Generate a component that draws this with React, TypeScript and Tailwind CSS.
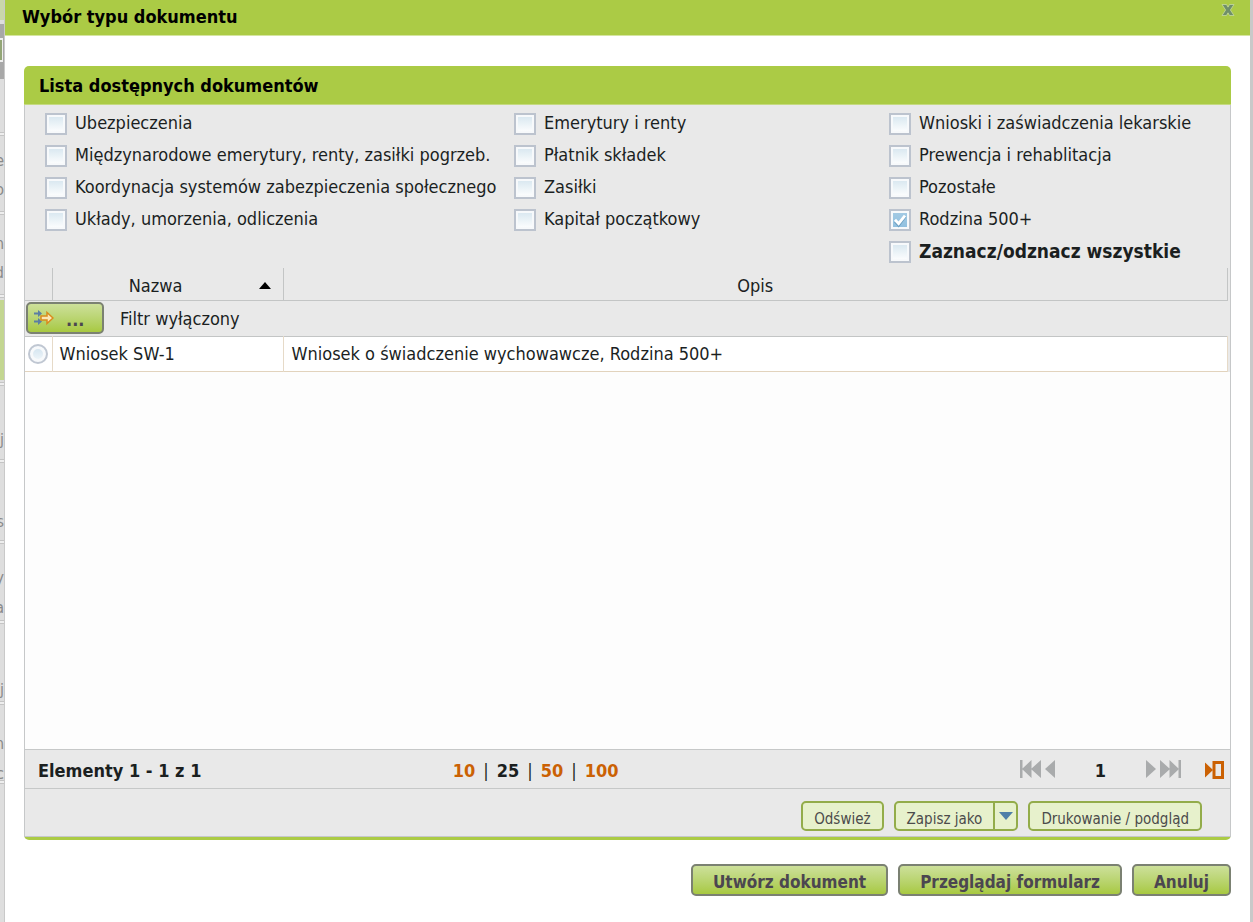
import { useState } from 'react';

interface Category {
  id: string;
  label: string;
  bold?: boolean;
}

const COLUMNS: Category[][] = [
  [
    { id: 'ubezpieczenia', label: 'Ubezpieczenia' },
    { id: 'miedzynarodowe', label: 'Międzynarodowe emerytury, renty, zasiłki pogrzeb.' },
    { id: 'koordynacja', label: 'Koordynacja systemów zabezpieczenia społecznego' },
    { id: 'uklady', label: 'Układy, umorzenia, odliczenia' },
  ],
  [
    { id: 'emerytury', label: 'Emerytury i renty' },
    { id: 'platnik', label: 'Płatnik składek' },
    { id: 'zasilki', label: 'Zasiłki' },
    { id: 'kapital', label: 'Kapitał początkowy' },
  ],
  [
    { id: 'wnioski', label: 'Wnioski i zaświadczenia lekarskie' },
    { id: 'prewencja', label: 'Prewencja i rehablitacja' },
    { id: 'pozostale', label: 'Pozostałe' },
    { id: 'rodzina', label: 'Rodzina 500+' },
    { id: 'wszystkie', label: 'Zaznacz/odznacz wszystkie', bold: true },
  ],
];

const ALL_IDS = COLUMNS.flat().map(c => c.id);

const PAGE_SIZES = [10, 25, 50, 100];

// Separators and text showing from the page under the dialog
const BACKDROP = [
  { top: 153, text: 'e' },
  { top: 182, text: 'o' },
  { top: 236, text: 'n' },
  { top: 265, text: 'd' },
  { top: 432, text: 'j' },
  { top: 514, text: 's' },
  { top: 570, text: 'y' },
  { top: 600, text: 'a' },
  { top: 682, text: 'j' },
  { top: 736, text: 'n' },
  { top: 766, text: 'c' },
];

const BACKDROP_LINES = [132, 211, 294, 382, 459, 540, 620, 701, 780];

function Backdrop() {
  return (
    <div className="relative w-1 shrink-0 overflow-hidden bg-[#dedede] text-base text-[#8a8a8a]" aria-hidden="true">
      <div className="h-5 bg-[#c9d6ab]" />
      <div className="mt-1 h-[55px] bg-[#a8a8a8] pt-[14px]">
        <div className="h-6 w-[3px] border-y-2 border-r border-[#eeeeee] bg-[#93a676]" />
      </div>
      <div className="absolute top-[300px] h-20 w-1 bg-[#c3d691]" />
      {BACKDROP_LINES.map(top => (
        <div key={top} className="absolute h-1 w-1 border-y border-[#c4c4c4] bg-[#eeeeee]" style={{ top }} />
      ))}
      {BACKDROP.map(({ top, text }) => (
        <span key={top} className="absolute right-0 leading-4" style={{ top }}>{text}</span>
      ))}
    </div>
  );
}

function CategoryBox({ item, checked, onToggle }: { item: Category; checked: boolean; onToggle: () => void }) {
  return (
    <li className="flex h-8 items-center">
      <span className="relative mr-2 flex size-[22px]">
        <input
          id={item.id}
          type="checkbox"
          checked={checked}
          onChange={onToggle}
          className="size-[22px] appearance-none border-2 border-[#bcc3ce] bg-linear-to-b from-[#d6e6ef] to-white shadow-[inset_0_0_0_2px_#f7f9fb] checked:from-[#a5cbe4] checked:to-[#8fbfdf]"
        />
        {checked && (
          <svg viewBox="0 0 22 22" className="pointer-events-none absolute inset-0 size-full">
            <path d="M6 12.5l3.6 4 6.6-9" fill="none" stroke="#6c9fc2" strokeWidth="2.6" />
            <path d="M6 10.8l3.6 3.8 6.4-8" fill="none" stroke="#fff" strokeWidth="2.8" />
          </svg>
        )}
      </span>
      <label htmlFor={item.id} className={item.bold ? 'pb-0.5 text-[19px] leading-6 font-bold' : 'pb-0.5 text-lg leading-6'}>
        {item.label}
      </label>
    </li>
  );
}

function FilterIcon() {
  return (
    <svg viewBox="0 0 20 16" className="h-4 w-5">
      <path d="M0 3.5h5M0 11.5h5" stroke="#5c7fa3" strokeWidth="1.8" />
      <path d="M4 0l4 3.5L4 7zM4 8l4 3.5L4 15z" fill="#5c7fa3" />
      <path d="M7 6h6V2.5L19 8l-6 5.500V10H7z" fill="#fbe6b4" stroke="#d98b1c" strokeWidth="1.5" />
    </svg>
  );
}

export default function App() {
  const [selected, setSelected] = useState<string[]>(['rodzina']);
  const [pageSize, setPageSize] = useState(25);
  const [picked, setPicked] = useState(false);

  const toggle = (id: string) => {
    if (id === 'wszystkie') {
      setSelected(prev => (prev.includes(id) ? [] : ALL_IDS));
      return;
    }
    setSelected(prev => (prev.includes(id) ? prev.filter(s => s !== id) : [...prev, id]));
  };

  const smallButton =
    'flex h-[30px] items-end rounded-[5px] border-2 border-[#93ac4a] bg-[#e7f1cc] text-[15px] leading-5 text-[#4b4b4b]';
  const bigButton =
    'h-8 rounded-[5px] border-2 border-[#7b8172] bg-linear-to-b from-[#cde09a] to-[#a8c93f] px-5 pt-1 text-[17px] leading-6 font-bold text-[#4b4650]';

  return (
    <div className="flex min-h-screen bg-[#c9c9c9] font-['DejaVu_Sans_Condensed','DejaVu_Sans',sans-serif] text-[#1b1f1f]">
      <Backdrop />
      <div role="dialog" aria-labelledby="dialog-title" className="mr-[3px] ml-px flex min-w-0 flex-1 flex-col bg-white">
        <header className="flex h-9 items-start justify-between border-b border-[#d5e5a0] bg-[#abcb45] pr-[15px] pl-[17px] text-black">
          <h1 id="dialog-title" className="pt-[5px] text-lg leading-6 font-bold">Wybór typu dokumentu</h1>
          <button type="button" aria-label="Zamknij" className="pt-1">
            <svg viewBox="0 0 14 12" className="h-3 w-[14px]">
              <path d="M1 .5h4.500L7 3.200 8.500.5H13L9.400 6l3.600 5.500H8.500L7 8.800 5.500 11.500H1L4.600 6z" fill="#6f8f6a" stroke="#c6dba0" strokeWidth=".8" />
            </svg>
          </button>
        </header>

        <main className="flex flex-1 flex-col px-[19px] pt-[30px] pb-[26px]">
          <section className="flex flex-1 flex-col rounded-[5px] border-b-[3px] border-[#abcb45]">
            <h2 className="h-[39px] rounded-t-[5px] border-b border-[#c5da80] bg-[#abcb45] pt-2 pl-[15px] text-lg leading-6 font-bold text-black">
              Lista dostępnych dokumentów
            </h2>

            <div className="flex flex-1 flex-col border-x border-[#c6c8c9] bg-[#e9e9e9]">
              <div className="grid grid-cols-[469fr_375fr_341fr] pt-[3px] pl-5">
                {COLUMNS.map((column, i) => (
                  <ul key={i}>
                    {column.map(item => (
                      <CategoryBox
                        key={item.id}
                        item={item}
                        checked={selected.includes(item.id)}
                        onToggle={() => toggle(item.id)}
                      />
                    ))}
                  </ul>
                ))}
              </div>

              <div className="pr-0.5">
                <table className="w-full table-fixed border-collapse text-lg leading-6">
                  <colgroup>
                    <col className="w-[27px]" />
                    <col className="w-[231px]" />
                    <col />
                  </colgroup>
                  <thead>
                    <tr className="h-8 border-b border-[#c3c5c5]">
                      <th className="border-r border-[#c3c5c5]" />
                      <th className="border-r border-[#c3c5c5] pt-1 font-normal">
                        <button type="button" className="flex w-full items-center justify-center">
                          <span className="flex-1">Nazwa</span>
                          <svg viewBox="0 0 12 7" className="mr-3 h-[7px] w-3">
                            <path d="M0 7l6-7 6 7z" fill="#000" />
                          </svg>
                        </button>
                      </th>
                      <th className="border-r border-[#c3c5c5] pt-1 font-normal">Opis</th>
                    </tr>
                  </thead>
                  <tbody>
                    <tr className="h-9 border-b border-[#c3c5c5]">
                      <td colSpan={3}>
                        <div className="flex items-center pl-px">
                          <button
                            type="button"
                            className="flex h-8 w-[78px] items-center rounded-[5px] border-2 border-[#7b8172] bg-linear-to-b from-[#cde09a] to-[#a8c93f] pl-1.5 font-bold text-[#4b4650]"
                          >
                            <FilterIcon />
                            <span className="ml-3 pt-1">...</span>
                          </button>
                          <span className="ml-4 pt-0.5">Filtr wyłączony</span>
                        </div>
                      </td>
                    </tr>
                    <tr className="h-[35px] border-b border-[#e2d3bd] bg-white">
                      <td className="border-r border-[#e6dac8]">
                        <input
                          type="radio"
                          name="dokument"
                          aria-label="Wniosek SW-1"
                          checked={picked}
                          onChange={() => setPicked(true)}
                          className="mx-auto block size-5 appearance-none rounded-full border-2 border-[#c0c7d2] bg-linear-to-b from-[#cfe2ee] to-[#f3f8fb] shadow-[inset_0_0_0_3px_#f7f9fb] checked:from-[#6ba3c8] checked:to-[#6ba3c8]"
                        />
                      </td>
                      <td className="border-r border-[#e6dac8] pl-[7px]">Wniosek SW-1</td>
                      <td className="border-r border-[#e6dac8] pl-2">Wniosek o świadczenie wychowawcze, Rodzina 500+</td>
                    </tr>
                  </tbody>
                </table>
              </div>

              <div className="flex-1 bg-[#fdfdfd]" />

              <div className="flex h-10 items-center border-y border-[#c6c8c8] text-lg leading-6 font-bold">
                <div className="w-[35%] pt-1 pl-[13px]">Elementy 1 - 1 z 1</div>
                <div className="flex flex-1 items-center pt-1 pl-1.5">
                  {PAGE_SIZES.map((size, i) => (
                    <span key={size} className="flex items-center">
                      {i > 0 && <span className="mx-2 font-normal">|</span>}
                      <button
                        type="button"
                        onClick={() => setPageSize(size)}
                        className={size === pageSize ? 'text-[#1b1f1f]' : 'text-[#cb6103]'}
                      >
                        {size}
                      </button>
                    </span>
                  ))}
                </div>
                <nav className="flex items-center pr-1.5 text-[#a9abac]" aria-label="Strony">
                  <button type="button" aria-label="Pierwsza strona">
                    <svg viewBox="0 0 21 18" className="h-[18px] w-[21px]" fill="currentColor">
                      <path d="M0 0h2.500v18H0zM11.500 0v18L2 9zM21 0v18L11 9z" />
                    </svg>
                  </button>
                  <button type="button" aria-label="Poprzednia strona" className="ml-1">
                    <svg viewBox="0 0 10 18" className="h-[18px] w-[10px]" fill="currentColor">
                      <path d="M10 0v18L0 9z" />
                    </svg>
                  </button>
                  <span className="w-[91px] pt-1 text-center text-[#1b1f1f]">1</span>
                  <button type="button" aria-label="Następna strona">
                    <svg viewBox="0 0 10 18" className="h-[18px] w-[10px]" fill="currentColor">
                      <path d="M0 0v18l10-9z" />
                    </svg>
                  </button>
                  <button type="button" aria-label="Ostatnia strona" className="ml-1">
                    <svg viewBox="0 0 21 18" className="h-[18px] w-[21px]" fill="currentColor">
                      <path d="M0 0v18l10-9zM9.500 0v18L19 9zM18.500 0H21v18h-2.500z" />
                    </svg>
                  </button>
                  <button type="button" aria-label="Przejdź do strony" className="ml-6 pt-0.5 text-[#cb6103]">
                    <svg viewBox="0 0 19 18" className="h-[18px] w-[19px]" fill="currentColor">
                      <path d="M0 1.500v15L8 9z" />
                      <path d="M9 1.500h8.500v15H9z" fill="none" stroke="currentColor" strokeWidth="3" />
                    </svg>
                  </button>
                </nav>
              </div>

              <div className="flex h-12 justify-end gap-2.5 border-b border-[#c6c8c9] pt-3 pr-7">
                <button type="button" className={`${smallButton} px-[11px]`}>Odśwież</button>
                <div className={smallButton}>
                  <button type="button" className="px-[11px]">Zapisz jako</button>
                  <button
                    type="button"
                    aria-label="Wybierz format"
                    className="flex h-full w-[23px] items-center justify-center border-l-2 border-[#93ac4a]"
                  >
                    <svg viewBox="0 0 14 8" className="h-2 w-[14px]">
                      <path d="M0 0h14L7 8z" fill="#4f7fa8" />
                    </svg>
                  </button>
                </div>
                <button type="button" className={`${smallButton} px-[11px]`}>Drukowanie / podgląd</button>
              </div>
            </div>
          </section>

          <footer className="flex justify-end gap-2.5 pt-6">
            <button type="button" className={bigButton}>Utwórz dokument</button>
            <button type="button" className={bigButton}>Przeglądaj formularz</button>
            <button type="button" className={bigButton}>Anuluj</button>
          </footer>
        </main>
      </div>
    </div>
  );
}
